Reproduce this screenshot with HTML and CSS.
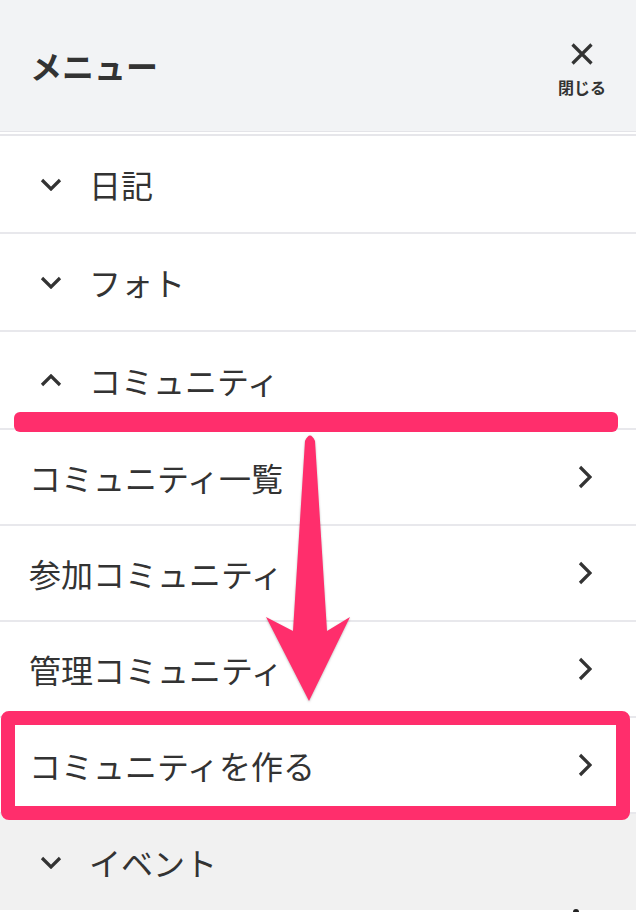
FILE: index.html
```html
<!DOCTYPE html>
<html lang="ja">
<head>
<meta charset="utf-8">
<title>メニュー</title>
<link rel="stylesheet" href="styles.css">
</head>
<body>
<div class="page">
  <header class="menu-header">
    <h1 class="menu-title">メニュー</h1>
    <button class="close-btn" type="button">
      <svg class="close-icon" viewBox="0 0 24 24" width="24" height="24"><path d="M2.5 2.5 L21.5 21.5 M21.5 2.5 L2.5 21.5" stroke="#333" stroke-width="3.2" fill="none"/></svg>
      <span class="close-label">閉じる</span>
    </button>
  </header>

  <ul class="menu-list">
    <li class="row top">
      <svg class="chev" viewBox="0 0 22 13" width="22" height="13"><path d="M2 2 L11 11 L20 2" stroke="#333" stroke-width="3.2" fill="none"/></svg>
      <span class="label">日記</span>
    </li>
    <li class="row top">
      <svg class="chev" viewBox="0 0 22 13" width="22" height="13"><path d="M2 2 L11 11 L20 2" stroke="#333" stroke-width="3.2" fill="none"/></svg>
      <span class="label">フォト</span>
    </li>
    <li class="row top">
      <svg class="chev" viewBox="0 0 22 13" width="22" height="13"><path d="M2 11 L11 2 L20 11" stroke="#333" stroke-width="3.2" fill="none"/></svg>
      <span class="label">コミュニティ</span>
    </li>
    <li class="row sub">
      <span class="label">コミュニティ一覧</span>
      <svg class="chev-right" viewBox="0 0 14 24" width="14" height="24"><path d="M2 2 L12 12 L2 22" stroke="#333" stroke-width="3.2" fill="none"/></svg>
    </li>
    <li class="row sub">
      <span class="label">参加コミュニティ</span>
      <svg class="chev-right" viewBox="0 0 14 24" width="14" height="24"><path d="M2 2 L12 12 L2 22" stroke="#333" stroke-width="3.2" fill="none"/></svg>
    </li>
    <li class="row sub">
      <span class="label">管理コミュニティ</span>
      <svg class="chev-right" viewBox="0 0 14 24" width="14" height="24"><path d="M2 2 L12 12 L2 22" stroke="#333" stroke-width="3.2" fill="none"/></svg>
    </li>
    <li class="row sub">
      <span class="label">コミュニティを作る</span>
      <svg class="chev-right" viewBox="0 0 14 24" width="14" height="24"><path d="M2 2 L12 12 L2 22" stroke="#333" stroke-width="3.2" fill="none"/></svg>
    </li>
    <li class="row top gray">
      <svg class="chev" viewBox="0 0 22 13" width="22" height="13"><path d="M2 2 L11 11 L20 2" stroke="#333" stroke-width="3.2" fill="none"/></svg>
      <span class="label">イベント</span>
    </li>
  </ul>

  <div class="mark-bar"></div>
  <div class="mark-box"></div>
  <svg class="mark-arrow" viewBox="0 0 636 912" width="636" height="912">
    <path d="M305 441 Q310 430 315 441 L327 631 L350 617 L309 701 L266 617 L293 631 Z" fill="#ff2e6c"/>
  </svg>
  <span class="peek-dot"></span>
</div>
</body>
</html>
```

FILE: styles.css
```css
html, body {
  margin: 0;
  padding: 0;
  background: #ffffff;
}

body {
  font-family: "Noto Sans CJK JP", "Noto Sans", sans-serif;
  color: #333333;
  overflow: hidden;
}

.page {
  position: relative;
  width: 636px;
  height: 912px;
  overflow: hidden;
}

.menu-header {
  height: 132px;
  box-sizing: border-box;
  background: #f2f3f5;
  border-bottom: 1px solid #e4e4e8;
  display: flex;
  align-items: center;
  justify-content: space-between;
  padding: 0 30px 0 30px;
}

.menu-title {
  margin: 0;
  font-size: 32px;
  font-weight: 700;
  color: #333333;
  line-height: 1;
  padding-bottom: 2px;
}

.close-btn {
  border: 0;
  background: transparent;
  padding: 0;
  display: flex;
  flex-direction: column;
  align-items: center;
  gap: 13px;
  margin-top: 6px;
  font-family: inherit;
  color: #333333;
}

.close-icon {
  display: block;
  width: 24px;
  height: 24px;
}

.close-label {
  font-size: 16px;
  font-weight: 700;
  line-height: 1;
}

.menu-list {
  list-style: none;
  margin: 2px 0 0;
  padding: 0;
  border-top: 2px solid #e6e6ea;
}

.row {
  display: flex;
  align-items: center;
  border-bottom: 2px solid #e8e8ec;
  background: #ffffff;
}

.row.top {
  height: 96px;
  padding-left: 40px;
  gap: 27px;
}

.row.sub {
  height: 94px;
  padding: 0 44px 0 29px;
  justify-content: space-between;
}

.row.gray {
  background: #f1f1f1;
  border-bottom: 0;
}

.label {
  font-size: 32px;
  font-weight: 400;
  line-height: 1;
  color: #333333;
}

.chev {
  display: block;
  width: 22px;
  height: 13px;
  flex: none;
}

.chev-right {
  display: block;
  width: 14px;
  height: 24px;
  flex: none;
}

/* annotation overlays */
.mark-bar {
  position: absolute;
  left: 14px;
  top: 412px;
  width: 604px;
  height: 20px;
  border-radius: 6px;
  background: #ff2e6c;
}

.mark-box {
  position: absolute;
  left: 1px;
  top: 711px;
  width: 629px;
  height: 109px;
  box-sizing: border-box;
  border: 14px solid #ff2e6c;
  border-radius: 8px;
}

.mark-arrow {
  position: absolute;
  left: 0;
  top: 0;
  filter: drop-shadow(0 1px 1px rgba(0, 0, 0, 0.25));
}

.peek-dot {
  position: absolute;
  left: 573px;
  top: 909px;
  width: 6px;
  height: 6px;
  border-radius: 50%;
  background: #222222;
}
```
